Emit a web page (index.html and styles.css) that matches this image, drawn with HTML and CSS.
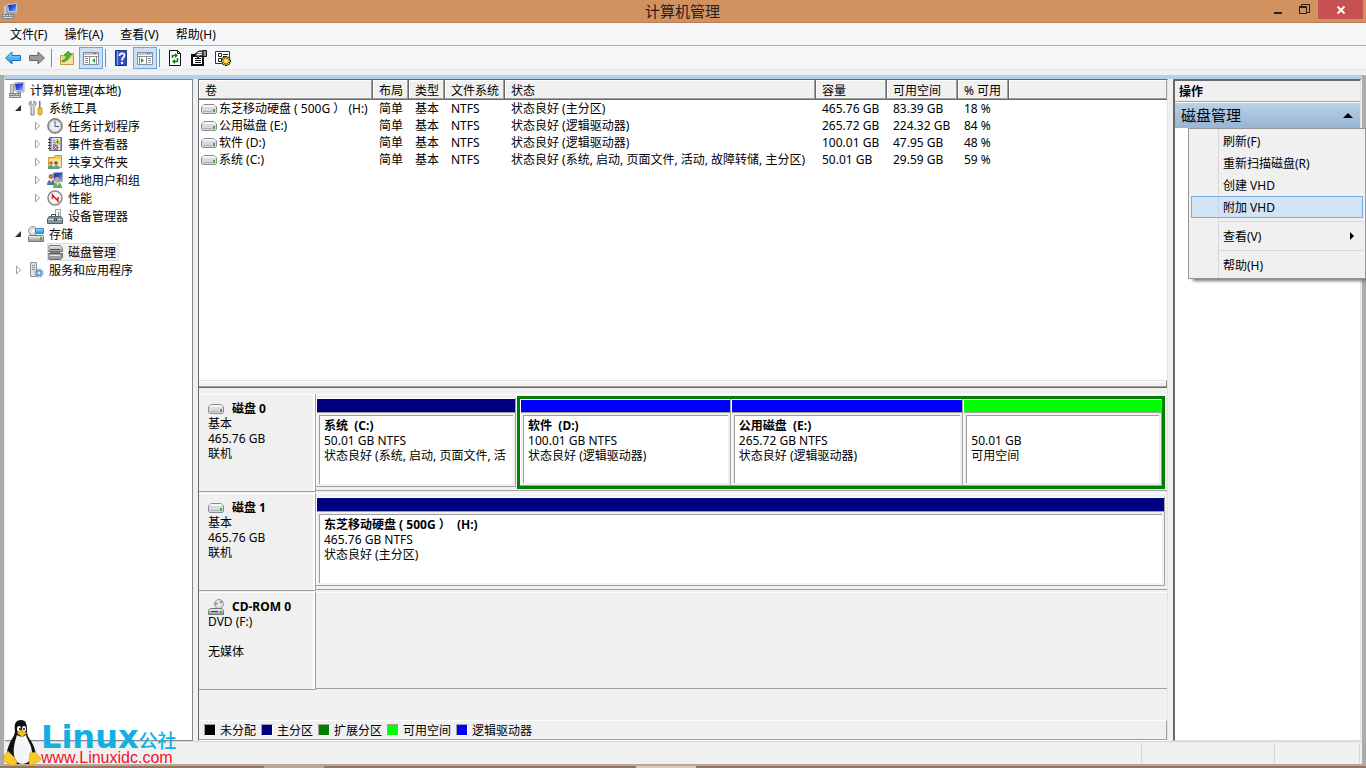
FILE: index.html
```html
<!DOCTYPE html>
<html lang="zh-CN">
	<head>
		<meta charset="UTF-8">
		<meta name="viewport" content="width=device-width, initial-scale=1.0">
		<title>计算机管理</title>
		<link rel="stylesheet" href="styles.css">
	</head>
	<body>
		<svg class="defs" aria-hidden="true">
			<linearGradient id="blue" x2="1" y2="1"><stop stop-color="#102a9c"/><stop offset=".5" stop-color="#2b50e0"/><stop offset="1" stop-color="#a9c4ff"/></linearGradient>
			<linearGradient id="cyan" x2="0" y2="1"><stop stop-color="#8fe0ff"/><stop offset="1" stop-color="#1593d8"/></linearGradient>
			<linearGradient id="metal" x2="0" y2="1"><stop stop-color="#f4f4f6"/><stop offset="1" stop-color="#8d9096"/></linearGradient>
			<symbol id="computer" viewBox="0 0 16 16">
				<path d="M1.500 2.500h3v9h-3z" fill="#c9ccd0" stroke="#9a9fa5"/>
				<path d="M5 1l10-1v10L6 9z" fill="#e3e7ea" stroke="#a4aab0"/>
				<path d="M6 2l8-1v8L7 8z" fill="url(#blue)"/>
				<path d="M8 10h4v2H8z" fill="#9aa0a6"/>
				<path d="M.5 11.500h11v4H.5z" fill="#d2d6d9" stroke="#7e858c"/>
				<path d="M1 13.500h10M3.500 12v2M6.500 12v2M9.500 12v2" stroke="#808890"/>
			</symbol>
			<symbol id="drive" viewBox="0 0 16 10">
				<path d="M3 .5h10l2.500 2.500v5l-1 1.500h-13L.5 8V3z" fill="#d9dade" stroke="#8a8a90"/>
				<path d="M3 1h10l2 2H1z" fill="#f5f5f6"/>
				<path d="M2 7.500h9" stroke="#aaaac0"/>
				<path d="M12 5h2v3h-2z" fill="#41b22e"/>
			</symbol>
			<symbol id="closed" viewBox="0 0 8 10"><path d="M2.500 1l4 4-4 4z" fill="#fff" stroke="#a0a0a0"/></symbol>
			<symbol id="open" viewBox="0 0 8 10"><path d="M7 2v6H1z" fill="#333"/></symbol>
		</svg>

		<header class="titlebar">
			<svg class="icon" viewBox="0 0 16 16"><use href="#computer"/></svg>
			<h1>计算机管理</h1>
			<div class="winbuttons">
				<button aria-label="最小化"><svg viewBox="0 0 12 12"><path d="M2 8h8v2H2z" fill="#222"/></svg></button>
				<button aria-label="还原"><svg viewBox="0 0 12 12"><path d="M3.500 3V.5h8v8H9M1.500 2.500h7v7h-7zM1 3.500h8" fill="none" stroke="#222"/></svg></button>
				<button class="close" aria-label="关闭"><svg viewBox="0 0 12 12"><path d="M2.500 2.500l7 7M9.500 2.500l-7 7" stroke="#fff" stroke-width="1.800"/></svg></button>
			</div>
		</header>

		<nav class="menubar">
			<button>文件(F)</button>
			<button>操作(A)</button>
			<button>查看(V)</button>
			<button>帮助(H)</button>
		</nav>

		<div class="toolbar">
			<button aria-label="后退"><svg viewBox="0 0 16 16"><path d="M.5 8L7 2v3.500h8.500v5H7V14z" fill="url(#cyan)" stroke="#1976b5"/></svg></button>
			<button aria-label="前进"><svg viewBox="0 0 16 16"><path d="M15.500 8L9 2v3.500H.5v5H9V14z" fill="#999" stroke="#686868"/></svg></button>
			<span class="sep"></span>
			<button aria-label="上一级"><svg viewBox="0 0 16 16"><path d="M1.500 5.500h6l1-2h6v11h-13z" fill="#f1d175" stroke="#c89c3b"/><path d="M2 8h12v6H2z" fill="#f9e29b"/><path d="M3 10c3 0 4-2 4-5H5l4-4 4 4h-2c0 4-4 7-8 7z" fill="#4cb728" stroke="#2f8a18" stroke-width=".5"/></svg></button>
			<button class="on" aria-label="控制台树"><svg viewBox="0 0 16 16"><path d="M.5 2.500h15v12H.5z" fill="#fff" stroke="#8a8f96"/><path d="M1 3h14v2H1z" fill="#c3c7cc"/><path d="M10 3h1v1h-1zM12 3h1v1h-1z" fill="#555"/><path d="M1 6.500h14M6.500 7v7M2 8.500h3M2 10.500h3M2 12.500h3M13.500 7v7" stroke="#8a8f96"/><path d="M12 8v5L9 10.500z" fill="#32a52a"/></svg></button>
			<span class="sep"></span>
			<button aria-label="帮助"><svg viewBox="0 0 16 16"><path d="M2.500.5h11v15h-11z" fill="#3154bd" stroke="#1b3484"/><path d="M4.500 1v14" stroke="#8ba4ec"/><path d="M6.500 6c0-3.500 5-3.500 5-.5 0 2-2.500 2-2.500 5" fill="none" stroke="#fff" stroke-width="1.800"/><path d="M8 12h2v2H8z" fill="#fff"/></svg></button>
			<button class="on" aria-label="操作窗格"><svg viewBox="0 0 16 16"><path d="M.5 2.500h15v12H.5z" fill="#fff" stroke="#8a8f96"/><path d="M1 3h14v2H1z" fill="#c3c7cc"/><path d="M10 3h1v1h-1zM12 3h1v1h-1z" fill="#555"/><path d="M1 6.500h14M9.500 7v7M11 8.500h3M11 10.500h3M11 12.500h3M2.500 7v7" stroke="#8a8f96"/><path d="M4 8v5l3-2.500z" fill="#32a52a"/></svg></button>
			<span class="sep"></span>
			<button aria-label="刷新"><svg viewBox="0 0 16 16"><path d="M2.500.5h8l3 3v12h-11z" fill="#fff" stroke="#111"/><path d="M10.500.5v3h3" fill="none" stroke="#111"/><path d="M5.500 8V5.500H8M10.500 8v3.500H8" fill="none" stroke="#08800c" stroke-width="1.500"/><path d="M8 3l3 2.500L8 8zM8 9l-3 2.500L8 14z" fill="#08800c"/></svg></button>
			<button aria-label="属性"><svg viewBox="0 0 16 16"><path d="M1 5h11v10H1z" fill="#fff" stroke="#111" stroke-width="2"/><path d="M2 6.500h9M4 8.500h6M4 10.500h6M4 12.500h6" stroke="#111"/><path d="M4 4l4-3h4v5H9L7 8 5 6z" fill="#777" stroke="#111"/><path d="M6 4.500h5M7 2.500h4" stroke="#fff"/><path d="M12 .5h3.500v6H12z" fill="#8f92c6" stroke="#111"/></svg></button>
			<button aria-label="设置"><svg viewBox="0 0 16 16"><path d="M.5 1.500h14v12H.5z" fill="#fff" stroke="#333"/><path d="M3.500 3.500h3v3h-3zM3.500 8.500h3v3h-3z" fill="none" stroke="#222"/><path d="M8 4.500h5M8 6.500h4" stroke="#222"/><path d="M11 6v10M6 11h10M7.500 7.500l7 7M14.500 7.500l-7 7" stroke="#222" stroke-width="2.500"/><path d="M11 7v8M7 11h8M8 8l6 6M14 8l-6 6" stroke="#ffd21c" stroke-width="1.300"/><circle cx="11" cy="11" r="1.500" fill="#fff" stroke="#ffd21c"/></svg></button>
		</div>

		<main class="workspace">
			<nav class="tree">
				<ul>
					<li><a href="#"><svg class="icon" viewBox="0 0 16 16"><use href="#computer"/></svg>计算机管理(本地)</a></li>
					<li class="l1"><button aria-label="折叠"><svg><use href="#open"/></svg></button><a href="#"><svg class="icon" viewBox="0 0 16 16"><path d="M3 1v3l1.500 1L6 4V1c3 1 2.500 4.500 0 5.500V15H3V6.500C.5 5 .5 2 3 1z" fill="#e3e5e8" stroke="#777c82"/><path d="M11 1h1.500v7H11z" fill="#777"/><path d="M10 8h4v5.500L13 15h-2l-1-1.500z" fill="#f6bf28" stroke="#b9810c" stroke-width=".7"/></svg>系统工具</a></li>
					<li class="l2"><button aria-label="展开"><svg><use href="#closed"/></svg></button><a href="#"><svg class="icon" viewBox="0 0 16 16"><circle cx="8" cy="8" r="7" fill="#dfe9f2" stroke="#868a90" stroke-width="1.800"/><circle cx="8" cy="8" r="5.500" fill="#e9f1f8" stroke="#d5c9a8"/><path d="M8 3v5.500h4" fill="none" stroke="#4d5a66"/></svg>任务计划程序</a></li>
					<li class="l2"><button aria-label="展开"><svg><use href="#closed"/></svg></button><a href="#"><svg class="icon" viewBox="0 0 16 16"><path d="M2.500 1.500h12v13h-12z" fill="#8fa8c9" stroke="#596b83"/><path d="M5 2h8v12H5z" fill="#dbe6f2"/><path d="M1 3.500h3M1 6.500h3M1 9.500h3M1 12.500h3" stroke="#444"/><path d="M6 4.500h2M6 6.500h2M6 8.500h2" stroke="#63809f"/><path d="M10.500 3L13 8H8z" fill="#ffd83c" stroke="#c69210" stroke-width=".7"/><path d="M10.500 5v2" stroke="#333"/><circle cx="8.500" cy="11.500" r="2.800" fill="#d84a42"/><path d="M7.500 10.500l2 2M9.500 10.500l-2 2" stroke="#fff"/></svg>事件查看器</a></li>
					<li class="l2"><button aria-label="展开"><svg><use href="#closed"/></svg></button><a href="#"><svg class="icon" viewBox="0 0 16 16"><path d="M1.500 3.500H7l1-2h6.500v12h-13z" fill="#f1c95e" stroke="#c99a35"/><path d="M2 5h12v8H2z" fill="#fbe39a"/><circle cx="4" cy="9" r="1.800" fill="#a87043"/><path d="M1 15c0-5 6-5 6 0z" fill="#4c9e88"/><circle cx="9" cy="9" r="1.800" fill="#705136"/><path d="M6.500 15c0-5 6-5 6 0z" fill="#5b9ab0"/></svg>共享文件夹</a></li>
					<li class="l2"><button aria-label="展开"><svg><use href="#closed"/></svg></button><a href="#"><svg class="icon" viewBox="0 0 16 16"><path d="M6 1l9.500-1v10L7 9z" fill="url(#blue)" stroke="#a9b0ba"/><circle cx="4" cy="4.500" r="2.500" fill="#b17a48"/><path d="M0 13c0-7 8-7 8 0z" fill="#56719a"/><circle cx="10" cy="7.500" r="2.500" fill="#d2a36f"/><path d="M6 16c0-7.500 9-7.500 9 0z" fill="#69a86c"/><path d="M3 8l1 3 1-3M9.500 11l1 3 1-3" fill="#fff"/></svg>本地用户和组</a></li>
					<li class="l2"><button aria-label="展开"><svg><use href="#closed"/></svg></button><a href="#"><svg class="icon" viewBox="0 0 16 16"><circle cx="8" cy="8" r="7" fill="#fff" stroke="#888" stroke-width="1.500"/><circle cx="8" cy="8" r="5" fill="none" stroke="#bbb" stroke-dasharray="1 1"/><path d="M5.500 9V5l5.500 6V7" fill="none" stroke="#cf2727" stroke-width="1.600"/></svg>性能</a></li>
					<li class="l2"><span></span><a href="#"><svg class="icon" viewBox="0 0 16 16"><path d="M8.500 1.500h5v7h-5z" fill="#f1f4f5" stroke="#a0a8aa"/><path d="M11 4h1v4h-1z" fill="#55b252"/><path d="M2 8.500h12l1.500 2.500v4.500H.5V11z" fill="#8798a0" stroke="#526067"/><path d="M1 11.500h14" stroke="#c8d1d4"/><path d="M4.500 8V6.500h4V8M7.500 10.500h2v2h-2z" fill="none" stroke="#38474f"/></svg>设备管理器</a></li>
					<li class="l1"><button aria-label="折叠"><svg><use href="#open"/></svg></button><a href="#"><svg class="icon" viewBox="0 0 16 16"><circle cx="5" cy="5" r="4.500" fill="#d8dddf" stroke="#959da1"/><circle cx="5" cy="5" r="1.500" fill="#fff"/><path d="M7.500 2.500h8v5h-8z" fill="url(#cyan)" stroke="#4a87a8"/><path d="M1 9.500h14l.5 1v5H.5v-5z" fill="url(#metal)" stroke="#767b80"/><path d="M12 11h2v3h-2z" fill="#41b22e"/></svg>存储</a></li>
					<li class="l2"><span></span><a class="selected" href="#"><svg class="icon" viewBox="0 0 16 16"><path d="M2.500 1.500h11l2 3v3H.5v-3z" fill="url(#metal)" stroke="#777"/><path d="M3 5.500h10" stroke="#555"/><path d="M3 8h10v2H3z" fill="#777"/><path d="M.5 9.500h15v4l-2 2h-11l-2-2z" fill="#999ca0" stroke="#65686c"/><path d="M3 11.500h10" stroke="#e9e9e9"/></svg>磁盘管理</a></li>
					<li class="l1"><button aria-label="展开"><svg><use href="#closed"/></svg></button><a href="#"><svg class="icon" viewBox="0 0 16 16"><path d="M2.500.5h6v14h-6z" fill="#dce1e5" stroke="#89939b"/><path d="M4 3.500h3M4 5.500h3M4 7.500h3" stroke="#89939b"/><circle cx="11" cy="11" r="2.500" fill="#dbe9f7" stroke="#6d99c3" stroke-width="2"/><circle cx="11" cy="11" r="4.200" fill="none" stroke="#6d99c3" stroke-dasharray="2 1.300"/></svg>服务和应用程序</a></li>
				</ul>
			</nav>

			<section class="center">
				<div class="volumes">
					<table>
						<thead>
							<tr><th class="c-vol">卷</th><th class="c-short">布局</th><th class="c-short">类型</th><th class="c-fs">文件系统</th><th class="c-status">状态</th><th class="c-size">容量</th><th class="c-size">可用空间</th><th class="c-free">% 可用</th><th></th></tr>
						</thead>
						<tbody>
							<tr><td><svg class="drive"><use href="#drive"/></svg>东芝移动硬盘 ( 500G ） (H:)</td><td>简单</td><td>基本</td><td>NTFS</td><td>状态良好 (主分区)</td><td>465.76 GB</td><td>83.39 GB</td><td>18 %</td><td></td></tr>
							<tr><td><svg class="drive"><use href="#drive"/></svg>公用磁盘 (E:)</td><td>简单</td><td>基本</td><td>NTFS</td><td>状态良好 (逻辑驱动器)</td><td>265.72 GB</td><td>224.32 GB</td><td>84 %</td><td></td></tr>
							<tr><td><svg class="drive"><use href="#drive"/></svg>软件 (D:)</td><td>简单</td><td>基本</td><td>NTFS</td><td>状态良好 (逻辑驱动器)</td><td>100.01 GB</td><td>47.95 GB</td><td>48 %</td><td></td></tr>
							<tr><td><svg class="drive"><use href="#drive"/></svg>系统 (C:)</td><td>简单</td><td>基本</td><td>NTFS</td><td>状态良好 (系统, 启动, 页面文件, 活动, 故障转储, 主分区)</td><td>50.01 GB</td><td>29.59 GB</td><td>59 %</td><td></td></tr>
						</tbody>
					</table>
				</div>
				<div class="splitter"></div>
				<div class="disks">
					<div class="disk">
						<div class="label">
							<h2><svg class="drive"><use href="#drive"/></svg>磁盘 0</h2>
							<p>基本</p><p>465.76 GB</p><p>联机</p>
						</div>
						<div class="graph">
							<div class="part primary sys"><div class="bar"></div><div class="info"><b>系统&nbsp; (C:)</b><p>50.01 GB NTFS</p><p>状态良好 (系统, 启动, 页面文件, 活</p></div></div>
							<div class="extended">
								<div class="part logical d"><div class="bar"></div><div class="info"><b>软件&nbsp; (D:)</b><p>100.01 GB NTFS</p><p>状态良好 (逻辑驱动器)</p></div></div>
								<div class="part logical e"><div class="bar"></div><div class="info"><b>公用磁盘&nbsp; (E:)</b><p>265.72 GB NTFS</p><p>状态良好 (逻辑驱动器)</p></div></div>
								<div class="part free f"><div class="bar"></div><div class="info"><b>&nbsp;</b><p>50.01 GB</p><p>可用空间</p></div></div>
							</div>
						</div>
					</div>
					<div class="disk">
						<div class="label">
							<h2><svg class="drive"><use href="#drive"/></svg>磁盘 1</h2>
							<p>基本</p><p>465.76 GB</p><p>联机</p>
						</div>
						<div class="graph">
							<div class="part primary whole"><div class="bar"></div><div class="info"><b>东芝移动硬盘 ( 500G ）&nbsp; (H:)</b><p>465.76 GB NTFS</p><p>状态良好 (主分区)</p></div></div>
						</div>
					</div>
					<div class="disk">
						<div class="label">
							<h2><svg class="cdrom" viewBox="0 0 16 16"><circle cx="11" cy="5" r="4.500" fill="#dce4dd" stroke="#999"/><path d="M11 5l2-4 2 2z" fill="#d95cd5"/><path d="M11 5L7 3v3z" fill="#5ac84a"/><circle cx="11" cy="5" r="1" fill="#fff"/><path d="M2 9.500h12l1.500 2v4H.5v-4z" fill="url(#metal)" stroke="#777"/><path d="M3 12.500h7" stroke="#444"/><path d="M12 12h2v2h-2z" fill="#41b22e"/></svg>CD-ROM 0</h2>
							<p>DVD (F:)</p><p>&nbsp;</p><p>无媒体</p>
						</div>
						<div class="graph"></div>
					</div>
				</div>
				<ul class="legend">
					<li><i class="unallocated"></i>未分配</li>
					<li><i class="primary"></i>主分区</li>
					<li><i class="ext"></i>扩展分区</li>
					<li><i class="free"></i>可用空间</li>
					<li><i class="logical"></i>逻辑驱动器</li>
				</ul>
			</section>

			<aside class="actions">
				<h2>操作</h2>
				<button class="group">磁盘管理<svg viewBox="0 0 10 6"><path d="M5 0l5 5H0z"/></svg></button>
				<div class="popup">
					<button>刷新(F)</button>
					<button>重新扫描磁盘(R)</button>
					<button>创建 VHD</button>
					<button class="hot">附加 VHD</button>
					<hr>
					<button>查看(V)<svg viewBox="0 0 4 8"><path d="M0 0l4 4-4 4z"/></svg></button>
					<hr>
					<button>帮助(H)</button>
				</div>
			</aside>
		</main>

		<footer class="statusbar"><span></span><span></span><span></span></footer>
		<div class="taskbar"></div>

		<div class="watermark">
			<svg viewBox="0 0 38 46">
				<path d="M18 0c-6 0-7 5-6 11 0 5-4 8-6 14-2 5-3 10-1 14l6 5h15l6-6c2-5-1-12-4-17-3-4-4-6-4-11 0-6-1-10-6-10z" fill="#111"/>
				<path d="M14 15c3 2 6 2 9 0 1 5 6 10 6 18 0 6-3 10-9 11-6 0-8-4-9-9-1-7 1-14 3-20z" fill="#f5f5f5"/>
				<ellipse cx="16" cy="9" rx="2" ry="3" fill="#fff"/><ellipse cx="21" cy="9" rx="2" ry="3" fill="#fff"/>
				<circle cx="17" cy="9" r="1"/><circle cx="21" cy="9" r="1"/>
				<path d="M14 13l4-3 6 3-5 4z" fill="#f7b91d" stroke="#b87a08" stroke-width=".5"/>
				<path d="M5 31l6 6 3 5c0 3-3 4-6 3l-6-3c-3-1-1-3-1-5 0-3 2-2 4-6zM27 33l6-1c0 3 4 4 5 7 0 2-5 3-8 6-3 1-4-1-4-4z" fill="#fbc928" stroke="#c98d08" stroke-width=".5"/>
			</svg>
			<div>
				<p class="brand">Linux<small>公社</small></p>
				<p class="url">www.Linuxidc.com</p>
			</div>
		</div>
	</body>
</html>
```

FILE: styles.css
```css
* {
	box-sizing: border-box;
}

body {
	margin: 0;
	display: flex;
	flex-direction: column;
	height: 100vh;
	overflow: hidden;
	position: relative;
	font-family: "Noto Sans", "Noto Sans CJK SC", sans-serif;
	font-size: 12px;
	line-height: 15px;
	color: #000;
	background-color: #f0f0f0;
}

h1, h2, p, ul {
	margin: 0;
	padding: 0;
	font-size: 12px;
	list-style: none;
}

button {
	margin: 0;
	padding: 0;
	border: 0;
	background: none;
	font: inherit;
	color: inherit;
}

a {
	color: inherit;
	text-decoration: none;
}

svg {
	display: block;
	flex: none;
}

.defs {
	position: absolute;
	width: 0; height: 0;
}

.icon {
	width: 16px; height: 16px;
}

.titlebar {
	display: grid;
	grid-template-columns: 1fr auto 1fr;
	height: 23px;
	flex: none;
	padding: 0 3px 0 2px;
	background-color: #d2925f;
	border-bottom: 1px solid #b97b50;
}

.titlebar .icon {
	margin-top: 3px;
}

.titlebar h1 {
	font-size: 15px;
	font-weight: normal;
	line-height: 22px;
	color: #222;
}

.winbuttons {
	display: flex;
	justify-content: flex-end;
}

.winbuttons button {
	width: 26px; height: 19px;
	display: flex;
	align-items: center;
	justify-content: center;
}

.winbuttons svg {
	width: 12px; height: 12px;
}

.winbuttons .close {
	width: 45px;
	margin-left: 1px;
	background-color: #c75050;
}

.menubar {
	display: flex;
	flex: none;
	gap: 17px;
	height: 23px;
	padding: 0 10px;
	background-color: #f5f6f8;
	border-bottom: 1px solid #b0b2b8;
}

.toolbar {
	display: flex;
	flex: none;
	align-items: center;
	height: 24px;
	margin-bottom: 5px;
	padding-left: 1px;
	background-color: #f5f6f8;
	border-bottom: 1px solid #e8e9ec;
}

.toolbar button {
	width: 24px; height: 22px;
	display: flex;
	align-items: center;
	justify-content: center;
	border: 1px solid transparent;
}

.toolbar button svg {
	width: 16px; height: 16px;
}

.toolbar .on {
	background-color: #c9e0f7;
	border-color: #66a7e8;
}

.sep {
	width: 1px; height: 18px;
	margin: 0 3px 0 2px;
	background-color: #888;
}

.workspace {
	flex: 1;
	min-height: 0;
	display: flex;
	gap: 5px;
	padding: 0 1px 0 1px;
	border: solid #ababab;
	border-width: 0 4px;
	background: linear-gradient(#b5cfe8 4px, #f0f0f0 4px);
}

.workspace > * {
	margin-top: 4px;
}

.tree {
	width: 188px;
	flex: none;
	padding-top: 1px;
	background-color: #fff;
	border: solid #828790;
	border-width: 1px 1px 1px 0;
}

.tree li {
	display: flex;
	align-items: center;
	height: 18px;
	padding-left: 4px;
}

.tree li.l1 {
	padding-left: 9px;
}

.tree li.l2 {
	padding-left: 28px;
}

.tree li > button, .tree li > span {
	width: 14px;
}

.tree button svg {
	width: 8px; height: 10px;
}

.tree a {
	display: flex;
	align-items: center;
	gap: 5px;
	height: 18px;
	padding-right: 3px;
}

.tree .selected {
	background-color: #f4f4f4;
	outline: 1px solid #dedede;
	outline-offset: -1px;
}

.center {
	flex: 1;
	min-width: 0;
	display: flex;
	flex-direction: column;
	border: 1px solid #696969;
	border-right-color: #e3e3e3;
	border-bottom-color: #fff;
}

.volumes {
	flex: 0 0 300px;
	background-color: #fff;
	overflow: hidden;
}

table {
	width: 100%;
	table-layout: fixed;
	border-collapse: separate;
	border-spacing: 0;
}

th {
	height: 20px;
	padding: 1px 0 0 6px;
	font-weight: normal;
	text-align: left;
	white-space: nowrap;
	background-color: #f0f0f0;
	border: solid #696969;
	border-width: 0 1px 1px 0;
	box-shadow: inset -1px -1px #a0a0a0, inset 1px 1px #fff;
}

th:last-child {
	border-right: 0;
}

td {
	height: 17px;
	padding: 0 0 0 6px;
	white-space: nowrap;
}

td:first-child {
	display: flex;
	align-items: center;
	gap: 2px;
	padding-left: 2px;
}

.drive {
	width: 16px; height: 10px;
}

.c-vol { width: 174px; }
.c-short { width: 36px; }
.c-fs { width: 60px; }
.c-status { width: 311px; }
.c-size { width: 71px; }
.c-free { width: 51px; }

.splitter {
	height: 8px;
	flex: none;
	background-color: #f0f0f0;
	border-top: 1px solid #e3e3e3;
	border-right: 1px solid #888;
	border-bottom: 1px solid #696969;
	box-shadow: inset 0 1px #fff, inset 0 -1px #a0a0a0;
}

.disks {
	flex: 1;
	padding-top: 6px;
}

.disk {
	display: flex;
	align-items: flex-start;
	height: 99px;
}

.label {
	width: 117px;
	height: 98px;
	padding: 7px 0 0 9px;
	border: solid #a0a0a0;
	border-width: 0 1px 1px 0;
	box-shadow: inset 0 1px #fff, inset -2px 0 #fff;
}

.label h2 {
	display: flex;
	align-items: center;
	gap: 8px;
	height: 15px;
}

.cdrom {
	width: 16px; height: 16px;
}

.graph {
	flex: 1;
	min-width: 0;
	display: flex;
	gap: 1px;
	height: 97px;
	padding: 2px 2px 1px 0;
	border-bottom: 1px solid #a0a0a0;
	box-shadow: inset 0 1px #fff;
}

.part {
	display: flex;
	flex-direction: column;
	min-width: 0;
	border: solid #a0a0a0;
	border-width: 0 1px 1px 0;
	box-shadow: inset 1px 1px #fff;
	padding: 1px 0 2px 1px;
}

.graph > .part {
	margin: 2px 0;
}

.bar {
	height: 14px;
	flex: none;
	border-bottom: 1px solid #a0a0a0;
}

.extended .bar {
	height: 13px;
}

.info {
	flex: 1;
	margin: 2px 2px 0 2px;
	padding: 2px 0 0 4px;
	overflow: hidden;
	white-space: nowrap;
	background-color: #fff;
	border: solid #a0a0a0;
	border-width: 1px 0 0 1px;
}

.info b {
	display: block;
}

.sys { flex: 200; }
.whole { flex: 1; }
.d { flex: 210; }
.e { flex: 232; }
.f { flex: 198; }

.extended {
	flex: 648;
	min-width: 0;
	display: flex;
	border: 3px solid #008000;
}

.primary .bar, i.primary { background-color: #000080; }
.logical .bar, i.logical { background-color: #0000ff; }
.free .bar, i.free { background-color: #00ff00; }
i.ext { background-color: #008000; }
i.unallocated { background-color: #000; }

.legend {
	display: flex;
	align-items: center;
	gap: 5px;
	height: 20px;
	flex: none;
	padding-left: 5px;
	border: solid #a0a0a0;
	border-width: 1px 1px 1px 0;
	border-top-color: #fff;
}

.legend li {
	display: flex;
	align-items: center;
	gap: 4px;
}

.legend i {
	width: 12px; height: 12px;
	border: 1px solid #a0a0a0;
	border-right-color: #fff;
	border-bottom-color: #fff;
}

.actions {
	position: relative;
	width: 188px;
	flex: none;
	background-color: #fff;
	border: solid #696969;
	border-width: 2px 1px 1px 2px;
	border-right-color: #e3e3e3;
	border-bottom-color: #e3e3e3;
}

.actions h2 {
	height: 21px;
	padding-left: 4px;
	line-height: 21px;
	background-color: #f0f0f0;
	border-bottom: 1px solid #a0a0a0;
}

.group {
	display: flex;
	align-items: center;
	justify-content: space-between;
	width: 100%;
	height: 26px;
	padding: 0 7px 0 6px;
	font-size: 15px;
	border-top: 1px solid #fff;
	background: linear-gradient(#b9d1ea, #98b4d2);
}

.group svg {
	width: 10px; height: 6px;
}

/* drop-down of the disk management group */
.popup {
	position: absolute;
	top: 47px; right: -6px;
	z-index: 1;
	width: 178px;
	padding: 1px 2px 2px;
	border: 1px solid #979797;
	background: linear-gradient(90deg, transparent 29px, #d7d7d7 29px, #d7d7d7 30px, transparent 30px) #f0f0f0;
	box-shadow: 4px 3px 3px -1px #777;
}

.popup button {
	display: flex;
	align-items: center;
	justify-content: space-between;
	width: 100%;
	height: 22px;
	padding: 0 8px 0 31px;
	border: 1px solid transparent;
}

.popup .hot {
	background-color: rgba(180, 215, 245, .5);
	border-color: #78aee5;
}

.popup svg {
	width: 4px; height: 8px;
}

.popup hr {
	height: 1px;
	margin: 3px 0 3px 28px;
	border: 0;
	background-color: #d7d7d7;
}

.statusbar {
	display: flex;
	justify-content: flex-end;
	height: 23px;
	flex: none;
	padding: 2px 2px 1px 0;
	border: solid #ababab;
	border-width: 0 4px;
	box-shadow: inset 0 1px #d7d7d7;
}

.statusbar span {
	width: 133px;
	border-right: 1px solid #d7d7d7;
}

.statusbar span:last-child {
	width: 85px;
}

.taskbar {
	height: 4px;
	flex: none;
	border-top: 2px solid #ababab;
	background: linear-gradient(90deg, #9c7355 264px, #c8a68c 264px, #c8a68c 324px, #9c7355 324px, #9c7355 636px, #e0cbb9 636px, #e0cbb9 696px, #9c7355 696px);
}

.watermark {
	position: absolute;
	left: 3px; bottom: 2px;
	z-index: 2;
	display: flex;
	align-items: flex-end;
}

.watermark svg {
	width: 38px; height: 46px;
}

.brand {
	display: flex;
	align-items: flex-end;
	font-family: "DejaVu Sans", sans-serif;
	font-size: 32px;
	font-weight: bold;
	line-height: 25px;
	color: #12afe3;
}

.brand small {
	font-family: "Noto Sans CJK SC", sans-serif;
	font-size: 19px;
	font-weight: 500;
	line-height: 20px;
}

.url {
	font-family: "Liberation Sans", sans-serif;
	font-size: 16px;
	line-height: 16px;
	color: #f0102c;
}
```
